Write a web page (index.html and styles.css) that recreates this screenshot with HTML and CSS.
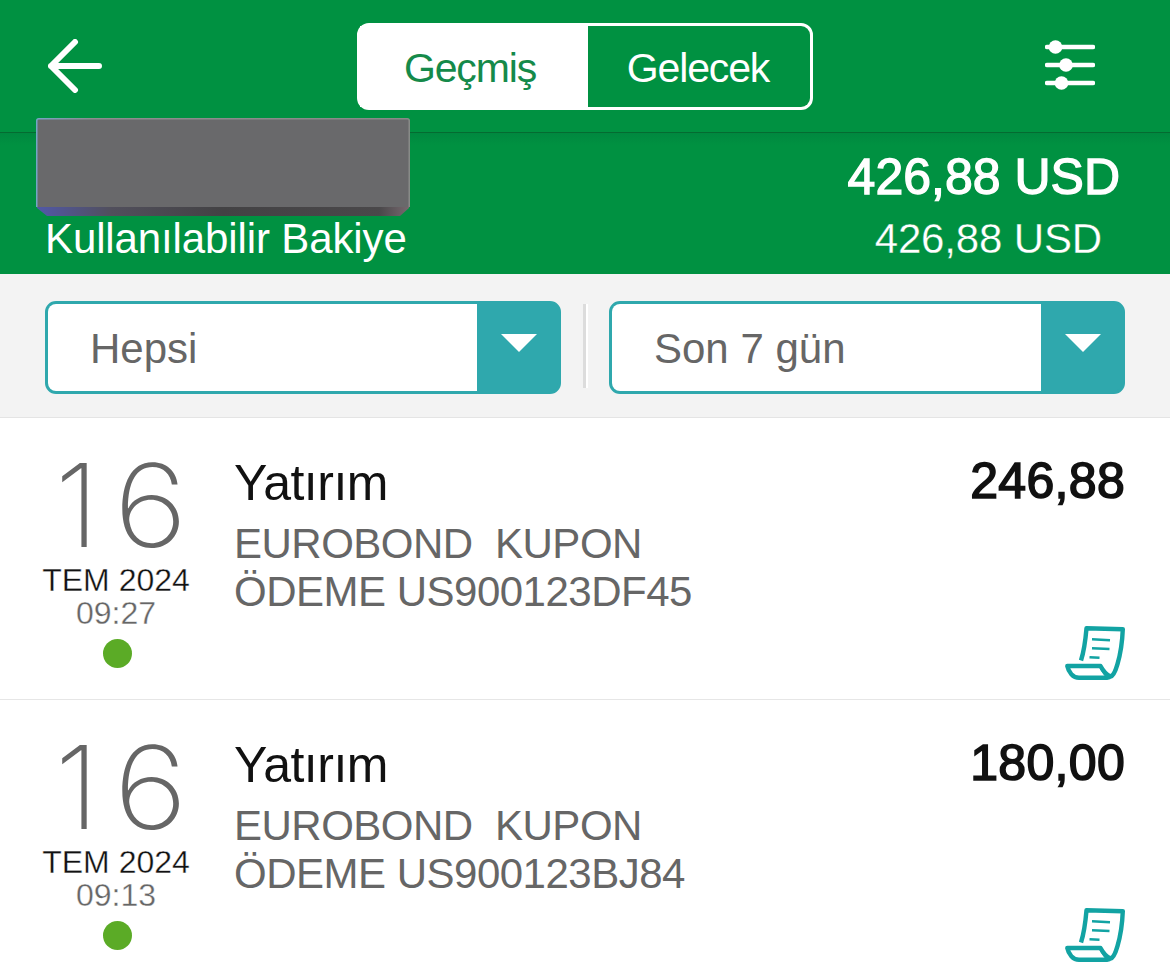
FILE: index.html
```html
<!DOCTYPE html>
<html lang="tr">

<head>
    <meta charset="UTF-8">
    <meta name="viewport" content="width=device-width, initial-scale=1.0">
    <title>Hesap Hareketleri</title>
    <link rel="stylesheet" href="styles.css">
</head>

<body>
    <svg class="symbols" width="0" height="0">
        <symbol id="receipt" viewBox="0 0 60 54">
            <path d="M16 34.500 C19 25 20.500 14 21.500 2.200 L57.800 3.200 C57.300 16 55.500 28 52.500 38 C50.500 45 48.500 50 45.500 50.500 C42 49 38.500 45.500 35.500 40 L2.300 40 C3.500 46 8 51.800 14 51.800 L41 51.800 Q44 52 46 50" fill="none" stroke="currentColor" stroke-width="4.400" stroke-linejoin="round" />
            <path d="M27 13.300 L45 14.200 M27 22.200 L44.500 23 M24.500 31.200 L34.500 31.800" fill="none" stroke="currentColor" stroke-width="2.400" />
            <path d="M36 40 C38 45 41 48 45.500 50.500 L42 52 C39 50 36 45 34 41 Z" fill="currentColor" />
        </symbol>
    </svg>

    <div class="header">
        <svg class="back" width="54" height="54" viewBox="0 0 54 54">
            <path d="M27 3 L3 27 L27 51 M3 27 H51" fill="none" stroke="#fff" stroke-width="6" stroke-linecap="round" stroke-linejoin="round" />
        </svg>
        <div class="tabs">
            <div class="tab active">Geçmiş</div>
            <div class="tab">Gelecek</div>
        </div>
        <svg class="filter" width="50" height="50" viewBox="0 0 50 50">
            <path d="M2 7 H48 M2 25 H48 M2 43 H48" stroke="#fff" stroke-width="4.500" stroke-linecap="round" />
            <circle cx="10.500" cy="7" r="6.800" fill="#fff" />
            <circle cx="21" cy="25" r="6.800" fill="#fff" />
            <circle cx="16.500" cy="43" r="6.800" fill="#fff" />
        </svg>
    </div>

    <div class="balance">
        <div class="balance-left">
            <svg class="account-mask" width="374" height="99" viewBox="0 0 374 99">
                <defs>
                    <linearGradient id="edge">
                        <stop offset="0" stop-color="#5158a8" />
                        <stop offset="0.200" stop-color="#514f5c" />
                        <stop offset="0.500" stop-color="#434244" />
                        <stop offset="0.920" stop-color="#4a484a" />
                        <stop offset="1" stop-color="#77696f" />
                    </linearGradient>
                    <linearGradient id="rim">
                        <stop offset="0" stop-color="#75a5c5" />
                        <stop offset="0.150" stop-color="#8d8e90" />
                        <stop offset="1" stop-color="#888b88" />
                    </linearGradient>
                </defs>
                <path d="M1 87 H373 V90 L364 98 H11 L1 90 Z" fill="url(#edge)" />
                <path d="M0.750 89 V2.750 Q0.750 0.750 2.750 0.750 H371.250 Q373.250 0.750 373.250 2.750 V89 Z" fill="#69696b" />
                <path d="M0.750 89 V2.750 Q0.750 0.750 2.750 0.750 H371.250 Q373.250 0.750 373.250 2.750 V89" fill="none" stroke="url(#rim)" stroke-width="1.500" />
            </svg>
            <div class="available-label">Kullanılabilir Bakiye</div>
        </div>
        <div class="balance-right">
            <div class="total">426,88 USD</div>
            <div class="available">426,88 USD</div>
        </div>
    </div>

    <div class="filters">
        <div class="select">
            <div class="select-value">Hepsi</div>
            <div class="select-arrow"></div>
        </div>
        <div class="divider"></div>
        <div class="select">
            <div class="select-value">Son 7 gün</div>
            <div class="select-arrow"></div>
        </div>
    </div>

    <div class="transactions">
        <div class="transaction">
            <div class="date">
                <div class="day"><span class="one">1</span><span class="six">6</span></div>
                <div class="month">TEM 2024</div>
                <div class="time">09:27</div>
                <div class="dot"></div>
            </div>
            <div class="info">
                <div class="title">Yatırım</div>
                <div class="description">EUROBOND&nbsp; KUPON</div>
                <div class="description">ÖDEME US900123DF45</div>
            </div>
            <div class="side">
                <div class="amount">246,88</div>
                <svg class="receipt" width="60" height="54"><use href="#receipt" /></svg>
            </div>
        </div>
        <div class="transaction">
            <div class="date">
                <div class="day"><span class="one">1</span><span class="six">6</span></div>
                <div class="month">TEM 2024</div>
                <div class="time">09:13</div>
                <div class="dot"></div>
            </div>
            <div class="info">
                <div class="title">Yatırım</div>
                <div class="description">EUROBOND&nbsp; KUPON</div>
                <div class="description">ÖDEME US900123BJ84</div>
            </div>
            <div class="side">
                <div class="amount">180,00</div>
                <svg class="receipt" width="60" height="54"><use href="#receipt" /></svg>
            </div>
        </div>
    </div>
</body>

</html>
```
FILE: styles.css
```css
* {
    margin: 0;
    padding: 0;
    box-sizing: border-box;
}

body {
    width: 1170px;
    height: 979px;
    overflow: hidden;
    background-color: #fff;
    font-family: "Liberation Sans", Arial, sans-serif;
    font-size: 42px;
    white-space: nowrap;
}

svg {
    display: block;
}

.symbols {
    display: none;
}

.header {
    height: 132px;
    padding: 23px 75px 0 48px;
    background-color: #009141;
    display: flex;
    justify-content: space-between;
    align-items: flex-start;
}

.back {
    margin-top: 16px;
}

.filter {
    margin-top: 17px;
}

.tabs {
    width: 456px;
    height: 87px;
    margin-left: 23px;
    background-color: #fff;
    border: 3px solid #fff;
    border-radius: 12px;
    display: flex;
}

.tab {
    flex: 1;
    padding-right: 2px;
    line-height: 84px;
    text-align: center;
    background-color: #009141;
    border-radius: 0 9px 9px 0;
    color: #fff;
    font-size: 41px;
    letter-spacing: -1.15px;
}

.tab.active {
    flex: 0 0 228px;
    padding-right: 8px;
    background-color: #fff;
    border-radius: 0;
    color: #158a4a;
}

.balance {
    height: 142px;
    padding: 0 50px 0 36px;
    background: linear-gradient(#00883f, #009141 12px);
    border-top: 1px solid #046b31;
    display: flex;
    justify-content: space-between;
    color: #fff;
}

.account-mask {
    margin-top: -15px;
}

.available-label {
    padding-left: 9px;
    line-height: 44px;
    letter-spacing: -0.12px;
}

.balance-right {
    padding-top: 13px;
    text-align: right;
}

.total {
    font-size: 50px;
    line-height: 62px;
    -webkit-text-stroke: 1.3px #fff;
}

.available {
    padding-right: 18px;
    line-height: 62px;
    letter-spacing: -0.15px;
    -webkit-text-stroke: 0.3px #009141;
}

.filters {
    height: 144px;
    padding: 27px 45px 0;
    background-color: #f3f3f3;
    border-bottom: 1px solid #e4e4e4;
    display: flex;
    justify-content: space-between;
}

.select {
    width: 516px;
    height: 93px;
    background-color: #2fa8ad;
    border: 3px solid #2fa8ad;
    border-radius: 11px;
    display: flex;
}

.select-value {
    flex: 1;
    padding-left: 42px;
    background-color: #fff;
    border-radius: 8px 0 0 8px;
    line-height: 90px;
    color: #666;
}

.select-arrow {
    width: 81px;
    display: flex;
    justify-content: center;
    padding: 30px 0 0 3px;
}

.select-arrow::before {
    content: "";
    width: 36px;
    height: 18px;
    background-color: #fff;
    clip-path: polygon(0 0, 100% 0, 50% 100%);
}

.divider {
    width: 5px;
    height: 84px;
    margin-top: 3px;
    background: linear-gradient(to right, #dcdcdc 3px, #fff 3px);
}

.transaction {
    height: 282px;
    border-bottom: 1px solid #e6e6e6;
    display: flex;
}

.date {
    width: 234px;
    padding: 30px 0 0 26px;
    display: flex;
    flex-direction: column;
    align-items: flex-start;
}

.date > div {
    width: 180px;
    text-align: center;
}

.date > .day {
    height: 116px;
    padding-left: 29px;
    line-height: 116px;
    text-align: left;
    font-family: Inter, sans-serif;
    font-size: 115px;
    font-weight: 200;
    color: #666;
}

.one {
    margin-right: 18px;
}

.six {
    display: inline-block;
    transform: scaleX(1.1);
}

.month,
.time {
    height: 33px;
    line-height: 33px;
    font-size: 32px;
    color: #111;
    -webkit-text-stroke: 0.35px #fff;
}

.time {
    color: #666;
}

.date > .dot {
    width: 29px;
    height: 29px;
    margin: 9px 0 0 77px;
    border-radius: 50%;
    background-color: #5bab26;
}

.info {
    flex: 1;
    padding-top: 35px;
}

.title {
    height: 67px;
    line-height: 60px;
    font-size: 50px;
    letter-spacing: -0.5px;
    color: #111;
}

.description {
    line-height: 48px;
    letter-spacing: -0.5px;
    color: #666;
}

.side {
    padding: 35px 45px 19px 0;
    display: flex;
    flex-direction: column;
    justify-content: space-between;
    align-items: flex-end;
}

.amount {
    line-height: 57px;
    font-size: 50px;
    letter-spacing: 0.3px;
    -webkit-text-stroke: 1.6px #111;
    color: #111;
}

.receipt {
    color: #12a3a3;
}
```
